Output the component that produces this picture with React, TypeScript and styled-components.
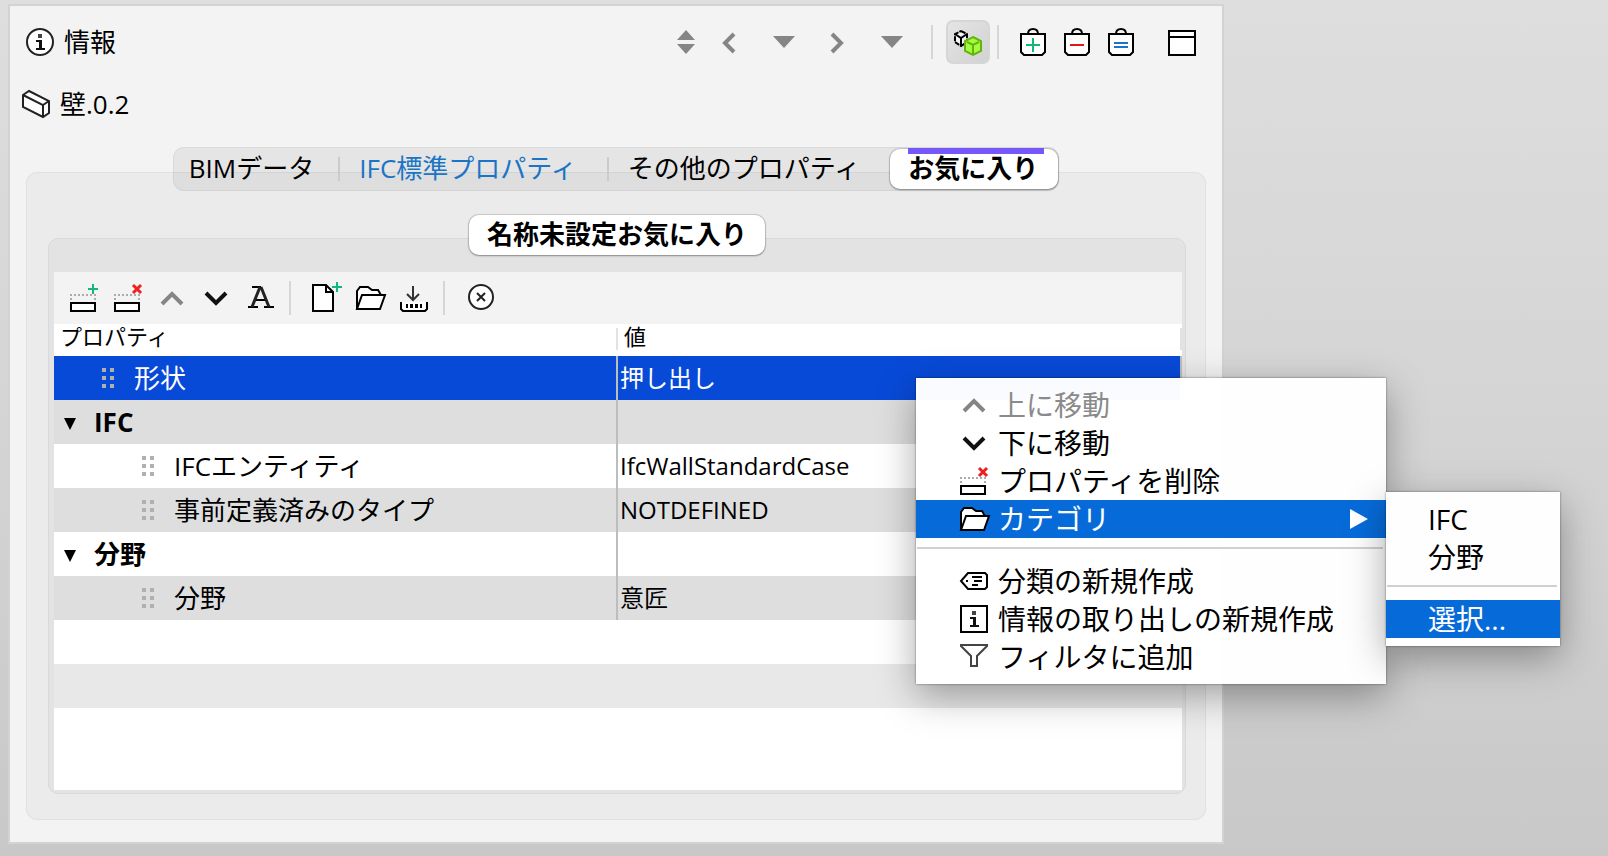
import React, { useState } from "react";
import styled, { createGlobalStyle, css } from "styled-components";

const GlobalStyle = createGlobalStyle`
  *, *::before, *::after { box-sizing: border-box; }
  body {
    margin: 0;
    font-family: "Open Sans", "Noto Sans CJK JP", sans-serif;
    font-size: 26px;
    line-height: 32px;
    color: #000;
  }
  button {
    margin: 0;
    padding: 0;
    border: 0;
    background: none;
    font: inherit;
    color: inherit;
    text-align: left;
    white-space: nowrap;
  }
`;

/* ---------- icons, drawn on a 28 x 28 grid ---------- */

const IconSvg = styled.svg`
  flex: none;
  display: block;
  width: 28px;
  height: 28px;
  overflow: visible;
`;

const Icon = ({ children }: { children: React.ReactNode }) => (
  <IconSvg viewBox="0 0 28 28" fill="none" stroke="#000" strokeWidth="2" aria-hidden="true">
    {children}
  </IconSvg>
);

const GREEN = "#12b878";
const RED = "#e21818";
const BLUE = "#1a73c8";
const GREY = "#858585";

const LetterI = () => (
  <g stroke="none" fill="#111">
    <rect x="12" y="6" width="4" height="4" fill="#444" />
    <path d="M10 12h6v8h3v2h-9v-2h3v-6h-3z" />
  </g>
);
const InfoIcon = () => (
  <Icon><circle cx="14" cy="14" r="13" fill="#fff" stroke="#222" /><LetterI /></Icon>
);
const InfoSquareIcon = () => (
  <Icon><rect x="1" y="1" width="26" height="26" fill="#fff" /><LetterI /></Icon>
);
const WallIcon = () => (
  <Icon>
    <path d="M1 5L7 1L27 11V23L21 27L1 17Z" fill="#fff" stroke="#222" />
    <path d="M1 5L21 15V27M21 15L27 11" stroke="#222" />
  </Icon>
);
const SorterIcon = () => (
  <Icon><g fill={GREY} stroke="none"><path d="M14 2L23 12H5Z" /><path d="M5 16H23L14 26Z" /></g></Icon>
);
const PrevIcon = () => <Icon><path d="M18 6L9 15L18 24" stroke={GREY} strokeWidth="4" /></Icon>;
const NextIcon = () => <Icon><path d="M8 6L17 15L8 24" stroke={GREY} strokeWidth="4" /></Icon>;
const DropIcon = () => <Icon><path d="M3 8H25L14 20Z" fill={GREY} stroke="none" /></Icon>;
const CubesIcon = () => (
  <Icon>
    <path d="M7 3L13 6V14L7 18L1 14V6Z" fill="#f4f4f4" strokeDasharray="5 1" />
    <path d="M1 6L7 10L13 6M7 10V18" />
    <path d="M19 9L27 13V23L19 27L11 23V13Z" fill="#a4fb3f" stroke="#62b40f" />
    <path d="M13 14L19 17L25 14M19 17V26" stroke="#62b40f" />
  </Icon>
);
const BagIcon = ({ kind }: { kind: "add" | "remove" | "equal" }) => (
  <Icon>
    <path d="M9 6C9 3 11 1 14 1S19 3 19 6" />
    <path d="M2 6H26V24L23 27H5L2 24Z" fill="#fff" />
    {kind === "add" && <path d="M7 17H21M14 10V24" stroke={GREEN} />}
    {kind === "remove" && <path d="M7 17H21" stroke={RED} />}
    {kind === "equal" && <path d="M7 15H21M7 19H21" stroke={BLUE} />}
  </Icon>
);
const WindowIcon = () => (
  <Icon><rect x="1" y="3" width="26" height="24" fill="#fff" /><path d="M1 9H27" /></Icon>
);
const RowShape = () => (
  <>
    <rect x="1" y="19" width="24" height="8" fill="#fff" />
    <path d="M0 11H26" stroke="#ababab" strokeDasharray="2 2" />
    <path d="M1 14V16M25 14V16" stroke="#ababab" />
  </>
);
const AddRowIcon = () => (
  <Icon><RowShape /><path d="M18 5H28M23 0V10" stroke={GREEN} /></Icon>
);
const RemoveRowIcon = () => (
  <Icon><RowShape /><path d="M19 1L27 9M27 1L19 9" stroke="#ee2020" strokeWidth="3" /></Icon>
);
const UpIcon = () => <Icon><path d="M4 20L14 10L24 20" stroke={GREY} strokeWidth="4" /></Icon>;
const DownIcon = () => <Icon><path d="M4 9L14 19L24 9" stroke="#111" strokeWidth="4" /></Icon>;
const FontIcon = () => (
  <Icon>
    <path d="M6 3H15M9 16H20M2 23H12M18 23H28" />
    <path d="M14 3L6 23M15 3L23 23" stroke="#222" strokeWidth="3" />
  </Icon>
);
const NewFileIcon = () => (
  <Icon>
    <path d="M1 1H14L21 8V27H1Z" fill="#fff" />
    <path d="M14 1V8H21" />
    <path d="M20 3H30M25 -2V8" stroke={GREEN} />
  </Icon>
);
const FolderIcon = () => (
  <Icon>
    <path d="M1 25V7L4 3H12L16 6H22L25 9V12L29 11L24 25Z" fill="#fff" stroke="none" />
    <path d="M1 25V7L4 3H12L16 6H22L25 11" />
    <path d="M1 25L6 11H29L24 25Z" />
  </Icon>
);
const DownloadIcon = () => (
  <Icon>
    <path d="M13 2V16M7 10L13 16L19 10" stroke="#333" />
    <path d="M1 18V25L3 27H25L27 25V18" fill="#fff" />
    <path d="M6 22H8M10 22H13M15 22H18M20 22H22" strokeWidth="4" />
  </Icon>
);
const ClearIcon = () => (
  <Icon>
    <circle cx="15" cy="13" r="12" fill="#fff" stroke="#222" />
    <path d="M11 9L19 17M19 9L11 17" stroke="#222" />
  </Icon>
);
const TagIcon = () => (
  <Icon>
    <path d="M8 6H25L27 8V20L25 22H8L1 14Z" fill="#fff" />
    <path d="M12 10H22M14 14H22M12 18H18M6 14H8" />
  </Icon>
);
const FunnelIcon = () => (
  <Icon><path d="M1 2H27V3L17 13V23H11V13L1 3Z" fill="#fff" stroke="#444" /></Icon>
);

/* ---------- info palette ---------- */

const Desktop = styled.div`
  position: relative;
  min-height: 100vh;
  padding: 4px 8px 12px;
  background: linear-gradient(#dedede, #d2d2d2 60%, #c8c8c8);
`;

const Palette = styled.main`
  width: 100%;
  max-width: 1216px;
  border: 2px solid #d3d3d3;
  background: #f3f3f3;
  padding-bottom: 22px;
`;

const TitleBar = styled.header`
  display: flex;
  align-items: center;
  height: 72px;
  padding: 0 18px 0 16px;
`;

const Title = styled.h1`
  display: flex;
  align-items: center;
  gap: 10px;
  margin: 0 auto 0 0;
  font-size: 26px;
  font-weight: 400;
`;

const NavGroup = styled.div`
  display: flex;
  gap: 10px;
`;

const ToolButton = styled.button`
  display: flex;
  flex: none;
  align-items: center;
  justify-content: center;
  width: 44px;
  height: 44px;
`;

const ToggleButton = styled(ToolButton)`
  border: 2px solid #d6d6d6;
  border-radius: 7px;
  background: linear-gradient(135deg, #e4e4e4, #d2d2d2);
`;

const Divider = styled.span<{ $before: number; $after: number }>`
  flex: none;
  width: 2px;
  height: 34px;
  margin: 0 ${(p) => p.$after}px 0 ${(p) => p.$before}px;
  background: #d6d6d6;
`;

const WindowSlot = styled.div`
  margin-left: 17px;
`;

const Subject = styled.h2`
  display: flex;
  align-items: center;
  gap: 10px;
  height: 52px;
  margin: 0 0 17px;
  padding: 0 12px;
  font-size: 26px;
  font-weight: 400;
`;

const Section = styled.div`
  display: flex;
  flex-direction: column;
  padding: 0 16px;
`;

const TabBar = styled.div`
  z-index: 1;
  display: flex;
  align-self: center;
  height: 44px;
  margin-bottom: -19px;
  padding-left: 15px;
  border: 1px solid rgba(0, 0, 0, 0.05);
  border-radius: 11px;
  background: rgba(0, 0, 0, 0.055);
`;

const Tab = styled.button<{ $tone?: string; $end: number }>`
  display: flex;
  align-items: center;
  padding: 0 ${(p) => p.$end}px 2px 0;
  color: ${(p) => p.$tone ?? "#000"};
`;

const TabDivider = styled.span`
  width: 2px;
  height: 24px;
  margin: 9px 19px 0 0;
  background: #cbcbcb;
`;

const pill = css`
  border-radius: 10px;
  background: #fff;
  box-shadow: 0 0 1px 1px rgba(0, 0, 0, 0.14), 0 1px 2px rgba(0, 0, 0, 0.3);
  font-weight: 700;
`;

const ActiveTab = styled.button`
  ${pill}
  position: relative;
  height: 40px;
  margin-top: 1px;
  padding: 0 20px 2px 18px;

  &::before {
    content: "";
    position: absolute;
    top: -1px;
    left: 18px;
    right: 14px;
    height: 6px;
    background: #7658fa;
  }
`;

const Group = styled.section`
  display: flex;
  flex-direction: column;
  padding: 40px 19px 25px 21px;
  border: 1px solid #e0e0e0;
  border-radius: 11px;
  background: #ebebeb;
`;

const FavoriteButton = styled.button`
  ${pill}
  z-index: 1;
  align-self: center;
  height: 40px;
  margin: 2px 0 -17px;
  padding: 0 18px 2px;
`;

const InnerGroup = styled.section`
  padding: 33px 3px 3px 5px;
  border: 1px solid #d9d9d9;
  border-radius: 10px;
  background: #e3e3e3;
`;

const ToolBar = styled.div`
  display: flex;
  align-items: center;
  height: 52px;
  padding: 0 8px;
  background: #f3f3f3;
`;

/* ---------- property table ---------- */

const Table = styled.table`
  width: 100%;
  table-layout: fixed;
  border-collapse: collapse;
  background: #fff;
`;

const HeadCell = styled.th`
  height: 32px;
  padding: 0 6px;
  font-size: 22px;
  line-height: 24px;
  font-weight: 400;
  text-align: left;
  vertical-align: top;
  background: linear-gradient(#e2e2e2, #e2e2e2) right 4px / 2px 22px no-repeat;
`;

const Row = styled.tr<{ $fill: string; $selected?: boolean }>`
  height: 44px;
  background: ${(p) => p.$fill};
  color: ${(p) => (p.$selected ? "#fff" : "#000")};
`;

const Cell = styled.td`
  height: 44px;
  padding: 0 2px;
  font-size: 24px;
  background: linear-gradient(#bdbdbd, #bdbdbd) right / 2px 100% no-repeat;
`;

const NameCell = styled(Cell)`
  font-size: 26px;
`;

const NameInner = styled.div<{ $level: number }>`
  display: flex;
  align-items: center;
  gap: ${(p) => (p.$level === 0 ? 18 : 20)}px;
  padding-left: ${(p) => (p.$level === 0 ? 8 : p.$level * 40 + 6)}px;
  font-weight: ${(p) => (p.$level === 0 ? 700 : 400)};
`;

const Twisty = styled.button`
  display: flex;
  width: 12px;
  height: 16px;
  align-items: flex-end;
`;

const GripSvg = styled.svg`
  display: block;
  flex: none;
  width: 12px;
  height: 20px;
`;

const Grip = () => (
  <GripSvg viewBox="0 0 12 20" fill="#b0b0b0" aria-hidden="true">
    {[0, 8, 16].map((y) => (
      <React.Fragment key={y}>
        <rect x="0" y={y} width="4" height="4" />
        <rect x="8" y={y} width="4" height="4" />
      </React.Fragment>
    ))}
  </GripSvg>
);

const EmptyRows = styled.div`
  height: 170px;
  background: linear-gradient(#fff 44px, #e8e8e8 44px 88px, #fff 88px);
`;

type Property = { name: string; value: string; level: number };

const properties: Property[] = [
  { name: "形状", value: "押し出し", level: 1 },
  { name: "IFC", value: "", level: 0 },
  { name: "IFCエンティティ", value: "IfcWallStandardCase", level: 2 },
  { name: "事前定義済みのタイプ", value: "NOTDEFINED", level: 2 },
  { name: "分野", value: "", level: 0 },
  { name: "分野", value: "意匠", level: 2 },
];

/* ---------- context menus ---------- */

const menuPanel = css`
  position: absolute;
  z-index: 2;
  padding: 8px 0;
  background: rgba(255, 255, 255, 0.98);
  box-shadow: 0 0 2px rgba(0, 0, 0, 0.5), 0 12px 36px rgba(0, 0, 0, 0.34);
  font-size: 28px;
`;

const ContextMenu = styled.div`
  ${menuPanel}
  top: 378px;
  left: 916px;
  width: 470px;
`;

const SubMenu = styled.div`
  ${menuPanel}
  top: 114px;
  left: 100%;
  width: 174px;
`;

const MenuItem = styled.button<{ $active?: boolean; $inset?: number }>`
  display: flex;
  align-items: center;
  gap: 10px;
  width: 100%;
  height: 38px;
  padding: 0 18px 0 ${(p) => p.$inset ?? 44}px;
  background: ${(p) => (p.$active ? "#066bd9" : "transparent")};
  color: ${(p) => (p.$active ? "#fff" : "#000")};

  &:disabled { color: #8a8a8a; }
`;

const MenuRule = styled.hr`
  height: 2px;
  margin: 9px 3px 13px 1px;
  border: 0;
  background: #d0d0d0;
`;

const ArrowSvg = styled.svg`
  width: 18px;
  height: 20px;
  margin-left: auto;
`;

export default function App() {
  const [selected, setSelected] = useState(0);

  return (
    <>
      <GlobalStyle />
      <Desktop>
        <Palette>
          <TitleBar>
            <Title><InfoIcon />情報</Title>
            <ToolButton aria-label="並べ替え"><SorterIcon /></ToolButton>
            <NavGroup>
              <ToolButton aria-label="前へ"><PrevIcon /></ToolButton>
              <ToolButton aria-label="前の履歴"><DropIcon /></ToolButton>
              <ToolButton aria-label="次へ"><NextIcon /></ToolButton>
              <ToolButton aria-label="次の履歴"><DropIcon /></ToolButton>
            </NavGroup>
            <Divider $before={17} $after={13} />
            <ToggleButton aria-label="選択に追従" aria-pressed="true"><CubesIcon /></ToggleButton>
            <Divider $before={7} $after={12} />
            <ToolButton aria-label="追加"><BagIcon kind="add" /></ToolButton>
            <ToolButton aria-label="除外"><BagIcon kind="remove" /></ToolButton>
            <ToolButton aria-label="置換"><BagIcon kind="equal" /></ToolButton>
            <WindowSlot>
              <ToolButton aria-label="ウィンドウ"><WindowIcon /></ToolButton>
            </WindowSlot>
          </TitleBar>

          <Subject><WallIcon />壁.0.2</Subject>

          <Section>
            <TabBar role="tablist">
              <Tab role="tab" aria-selected="false" $end={24}>BIMデータ</Tab>
              <TabDivider />
              <Tab role="tab" aria-selected="false" $tone="#1b74c4" $end={30}>IFC標準プロパティ</Tab>
              <TabDivider />
              <Tab role="tab" aria-selected="false" $end={30}>その他のプロパティ</Tab>
              <ActiveTab role="tab" aria-selected="true">お気に入り</ActiveTab>
            </TabBar>

            <Group>
              <FavoriteButton>名称未設定お気に入り</FavoriteButton>
              <InnerGroup>
                <ToolBar role="toolbar">
                  <ToolButton aria-label="プロパティを追加"><AddRowIcon /></ToolButton>
                  <ToolButton aria-label="プロパティを削除"><RemoveRowIcon /></ToolButton>
                  <ToolButton aria-label="上に移動"><UpIcon /></ToolButton>
                  <ToolButton aria-label="下に移動"><DownIcon /></ToolButton>
                  <ToolButton aria-label="名称変更"><FontIcon /></ToolButton>
                  <Divider $before={7} $after={13} />
                  <ToolButton aria-label="新規"><NewFileIcon /></ToolButton>
                  <ToolButton aria-label="開く"><FolderIcon /></ToolButton>
                  <ToolButton aria-label="保存"><DownloadIcon /></ToolButton>
                  <Divider $before={7} $after={13} />
                  <ToolButton aria-label="クリア"><ClearIcon /></ToolButton>
                </ToolBar>

                <Table>
                  <thead>
                    <tr>
                      <HeadCell scope="col">プロパティ</HeadCell>
                      <HeadCell scope="col">値</HeadCell>
                    </tr>
                  </thead>
                  <tbody>
                    {properties.map((p, i) => (
                      <Row
                        key={i}
                        $selected={i === selected}
                        $fill={i === selected ? "#084ad8" : i % 2 ? "#dedede" : "#fff"}
                        onClick={() => setSelected(i)}
                      >
                        <NameCell>
                          <NameInner $level={p.level}>
                            {p.level === 0 ? (
                              <Twisty aria-label="折りたたむ" aria-expanded="true">
                                <svg width="12" height="12" viewBox="0 0 12 12"><path d="M0 0H12L6 12Z" /></svg>
                              </Twisty>
                            ) : (
                              <Grip />
                            )}
                            {p.name}
                          </NameInner>
                        </NameCell>
                        <Cell>{p.value}</Cell>
                      </Row>
                    ))}
                  </tbody>
                </Table>
                <EmptyRows />
              </InnerGroup>
            </Group>
          </Section>
        </Palette>

        <ContextMenu role="menu">
          <MenuItem role="menuitem" disabled><UpIcon />上に移動</MenuItem>
          <MenuItem role="menuitem"><DownIcon />下に移動</MenuItem>
          <MenuItem role="menuitem"><RemoveRowIcon />プロパティを削除</MenuItem>
          <MenuItem role="menuitem" aria-haspopup="menu" aria-expanded="true" $active>
            <FolderIcon />カテゴリ
            <ArrowSvg viewBox="0 0 18 20" fill="#fff" aria-hidden="true"><path d="M0 0L18 10L0 20Z" /></ArrowSvg>
          </MenuItem>
          <MenuRule />
          <MenuItem role="menuitem"><TagIcon />分類の新規作成</MenuItem>
          <MenuItem role="menuitem"><InfoSquareIcon />情報の取り出しの新規作成</MenuItem>
          <MenuItem role="menuitem"><FunnelIcon />フィルタに追加</MenuItem>
          <SubMenu role="menu">
            <MenuItem role="menuitem" $inset={42}>IFC</MenuItem>
            <MenuItem role="menuitem" $inset={42}>分野</MenuItem>
            <MenuRule />
            <MenuItem role="menuitem" $inset={42} $active>選択...</MenuItem>
          </SubMenu>
        </ContextMenu>
      </Desktop>
    </>
  );
}
